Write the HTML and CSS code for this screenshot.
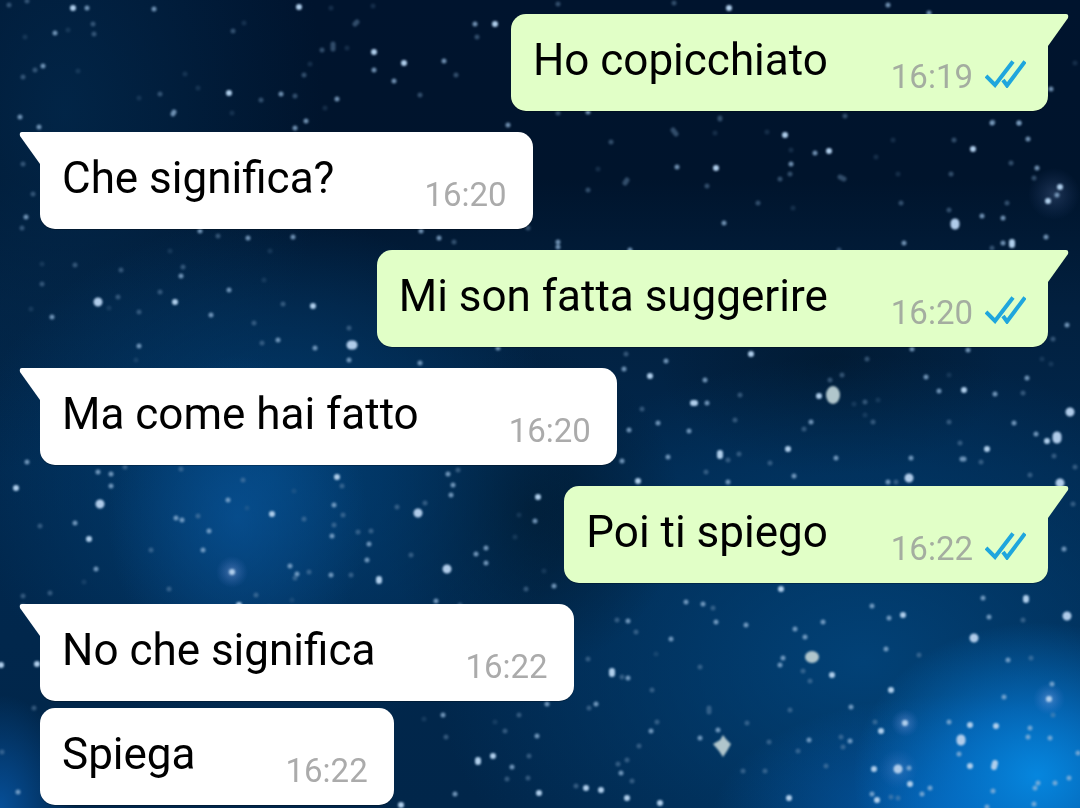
FILE: index.html
```html
<!DOCTYPE html>
<html lang="it">
<head>
<meta charset="utf-8">
<meta name="viewport" content="width=device-width, initial-scale=1">
<title>Chat</title>
<link rel="stylesheet" href="styles.css">
</head>
<body>
<svg class="sky" viewBox="0 0 1080 808" preserveAspectRatio="xMidYMid slice" aria-hidden="true">
  <defs>
    <radialGradient id="halo"><stop offset="0" stop-color="#9db4f0" stop-opacity=".4"/><stop offset="1" stop-color="#5c80d8" stop-opacity="0"/></radialGradient>
  </defs>
  <g fill="url(#halo)"><circle cx="232" cy="572" r="16"/><circle cx="905" cy="723" r="14"/><circle cx="1049" cy="699" r="16"/><circle cx="1054" cy="194" r="26" opacity=".5"/><circle cx="898" cy="769" r="20" opacity=".6"/></g>
  <path class="star star-faint" d="M68 30h0M25 37h0M78 71h0M244 23h0M331 8h0M373 6h0M347 48h0M310 64h0M185 74h0M198 88h0M139 98h0M325 108h0M232 113h0M42 264h0M170 251h0M264 280h0M270 251h0M109 308h0M31 309h0M136 360h0M715 133h0M767 132h0M791 150h0M598 169h0M793 208h0M876 157h0M898 174h0M893 140h0M84 582h0M247 508h0M161 607h0M292 600h0M294 491h0M519 515h0M515 537h0M544 571h0M854 404h0M878 400h0M865 415h0M949 375h0M1042 359h0M1051 364h0M656 654h0M424 719h0M495 722h0M1075 63h0"/>
  <path class="star star-dim" d="M9 5h0M27 1h0M93 24h0M94 34h0M35 70h0M23 77h0M233 31h0M355 24l2-2M477 37h0M322 50h0M333 44v5M456 75h0M304 75h0M160 94h0M261 100h0M295 96h0M420 95h0M23 164h0M22 228h0M33 194h0M75 265h0M42 284h0M121 270h0M183 267h0M160 292h0M139 312h0M118 297h0M218 236h0M283 304h0M254 323h0M262 343h0M349 328h0M558 113h0M720 119h0M673 130l3 4M611 142h0M790 174h0M780 179h0M625 183l2-3M588 190h0M707 186h0M758 203h0M845 116h0M840 177l4 2M901 203h0M954 140h0M993 122h0M1019 123h0M1011 163h0M951 174h0M1034 178h0M949 210h0M1007 203h0M992 248h0M839 250h0M40 526h0M23 606h0M50 593h0M125 467h0M181 469h0M243 480h0M198 516h0M151 550h0M169 589h0M256 595h0M269 607h0M295 578h0M309 572h0M351 575h0M358 532h0M371 531h0M334 525h0M343 515h0M342 486h0M304 519h0M458 470h0M425 503h0M397 507h0M411 555h0M526 589h0M460 605h0M626 354h0M740 395h0M642 409h0M735 420h0M830 380h0M842 375h0M865 402h0M873 422h0M804 429h0M770 463h0M739 454h0M728 460h0M706 472h0M896 482h0M1023 393h0M960 443h0M981 462h0M949 422h0M1054 456h0M1075 467h0M1053 339h0M1073 504h0M1030 475h0M867 359h0M713 608h0M617 620h0M636 632h0M810 681h0M803 671h0M1023 620h0M919 655h0M1031 658h0M1053 715h0M790 710h0M588 659h0M622 677h0M700 667h0M652 690h0M589 708h0M709 708v4M657 722h0M639 746h0M747 723h0M769 742h0M798 751h0M841 737h0M843 747h0M826 766h0M743 771h0M765 771h0M618 764h0M627 760h0M632 781h0M875 722h0M891 797h0M898 798h0M446 737h0M519 715h0M505 731h0M507 779h0M529 756h0M528 778h0M576 786h0M23 596h0M34 708h0M2 752h0M454 242h0M528 228h0M674 3h0M558 4h0M720 118h0"/>
  <path class="star star-mid" d="M87 8h0M154 9h0M55 33h0M43 66h0M475 24h0M374 70h0M444 61h0M394 81h0M173 114l1-2M281 94h0M337 99h0M306 121h0M295 128h0M20 117h0M39 127h0M508 125h0M26 217h0M200 231h0M248 238h0M293 237h0M181 276h0M229 290h0M211 315h0M52 317h0M139 346h0M278 340h0M315 348h0M349 360h0M588 112h0M677 167h0M815 153h0M791 164h0M724 223h0M558 247h0M630 250h0M1028 139h0M1037 168h0M1057 195h0M982 216h0M1003 218h0M1046 237h0M1003 243h0M904 243h0M27 462h0M98 472h0M111 474h0M111 486h0M75 523h0M96 569h0M228 500h0M176 518h0M182 520h0M209 531h0M203 550h0M290 566h0M297 574h0M331 575h0M367 560h0M369 544h0M332 536h0M334 505h0M448 474h0M453 485h0M451 495h0M476 554h0M486 548h0M486 563h0M535 521h0M554 586h0M436 601h0M666 361h0M624 369h0M705 380h0M707 403h0M658 423h0M629 430h0M689 431h0M811 422h0M836 458h0M794 476h0M668 457h0M622 461h0M728 482h0M911 458h0M888 482h0M912 349h0M968 350h0M926 377h0M939 391h0M995 394h0M1027 378h0M1036 434h0M1014 423h0M962 459h2M1067 325h0M1064 549h0M1052 268h0M686 602h0M703 604h0M716 622h0M628 621h0M671 639h0M746 625h0M795 629h0M823 622h0M805 637h0M783 658h0M780 665h0M872 606h0M889 618h0M983 598h0M989 617h0M886 649h0M1008 660h0M1052 684h0M1004 697h0M851 707h0M628 678h0M596 704h0M651 731h0M700 738h0M718 730h0M809 740h0M850 741h0M621 773h0M949 722h0M1030 728h0M1028 737h0M1050 738h0M959 754h0M909 768h0M930 788h0M922 794h0M872 794h0M1038 783h0M1035 788h0M1055 783h0M1069 778h0M1034 804h0M993 791h0M987 807h0M1078 753h0M443 715h0M547 704h0M537 736h0M512 767h0M455 794h0M18 792h0M421 231h0M439 238h0M558 242h0M420 363h0M498 348h0M888 5h0M929 13h0M1051 89h0M992 123h0M1019 123h0"/>
  <path class="star star-bright" d="M73 8h0M299 7h0M495 24h0M374 52h0M404 63h0M229 93h0M175 302h0M313 306h0M716 168h0M785 135h0M829 151h0M973 149h0M1060 187h0M1048 201h0M1012 242v3M16 488h0M89 539h0M272 514h0M232 572h0M239 605h0M379 579v2M337 477h0M538 497h0M650 376h0M751 354h0M693 403h2M819 396h0M788 449h0M720 453v3M638 481h0M964 390h0M1047 441h0M987 449h0M781 589h0M832 675h0M903 615h0M1026 598v2M1049 699h0M891 690h0M612 671v3M789 798h0M627 798h0M586 788h0M601 790h0M660 803h0M881 731h0M905 723h0M970 725h0M996 726h0M970 766h0M995 763l-1 4M874 769h0M910 784h0M877 800h0M493 756h0M478 760v2M539 793h0M401 805h0M1 665h0M37 664h0M729 8h0"/>
  <path class="star star-large" d="M351 345h2M955 223v2M100 504h0M418 513h0M447 569h0M909 478h0M1070 412h0M1057 436v3M1060 483h0M1067 616h0M974 638h0M961 739v2M898 769h0M98 302h0"/>
  <g class="star-giant"><ellipse cx="833" cy="395" rx="7" ry="9"/><ellipse cx="812" cy="657" rx="7" ry="6"/><path d="M713 744l7-4 3-5 3 4 5 5-4 7-4 6-4-6z"/></g>
</svg>

<svg class="symbols" aria-hidden="true">
  <symbol id="tail" viewBox="0 0 21 32"><path d="M0 0h18q3 0 2 4L0 32z"/></symbol>
  <symbol id="ticks" viewBox="0 0 41 29"><path d="M1 17l9 9L28 2.500M18 21l4 5.500L40 2.500"/></symbol>
</svg>

<main class="chat">
  <article class="bubble sent first">
    <p class="message">Ho copicchiato</p>
    <div class="meta"><time>16:19</time><svg class="ticks" role="img" aria-label="Letto"><use href="#ticks"/></svg></div>
    <svg class="tail" aria-hidden="true"><use href="#tail"/></svg>
  </article>
  <article class="bubble received first">
    <p class="message">Che significa?</p>
    <div class="meta"><time>16:20</time></div>
    <svg class="tail" aria-hidden="true"><use href="#tail"/></svg>
  </article>
  <article class="bubble sent first">
    <p class="message">Mi son fatta suggerire</p>
    <div class="meta"><time>16:20</time><svg class="ticks" role="img" aria-label="Letto"><use href="#ticks"/></svg></div>
    <svg class="tail" aria-hidden="true"><use href="#tail"/></svg>
  </article>
  <article class="bubble received first">
    <p class="message">Ma come hai fatto</p>
    <div class="meta"><time>16:20</time></div>
    <svg class="tail" aria-hidden="true"><use href="#tail"/></svg>
  </article>
  <article class="bubble sent first">
    <p class="message">Poi ti spiego</p>
    <div class="meta"><time>16:22</time><svg class="ticks" role="img" aria-label="Letto"><use href="#ticks"/></svg></div>
    <svg class="tail" aria-hidden="true"><use href="#tail"/></svg>
  </article>
  <article class="bubble received first">
    <p class="message">No che significa</p>
    <div class="meta"><time>16:22</time></div>
    <svg class="tail" aria-hidden="true"><use href="#tail"/></svg>
  </article>
  <article class="bubble received">
    <p class="message">Spiega</p>
    <div class="meta"><time>16:22</time></div>
  </article>
</main>
</body>
</html>
```

FILE: styles.css
```css
* {
  box-sizing: border-box;
}

body {
  margin: 0;
  min-height: 100vh;
  font-family: Roboto, "Liberation Sans", sans-serif;
  color: #000;
  background: #02203f;
}

/* Night sky behind the conversation */
.sky {
  position: fixed;
  inset: 0;
  z-index: -1;
  width: 100%;
  height: 100%;
  background:
    radial-gradient(ellipse 17% 19% at 96% 96%, #0686de 0%, rgba(5, 120, 210, 0.7) 45%, rgba(4, 90, 170, 0) 100%),
    radial-gradient(ellipse 22% 15% at 88% 101%, rgba(4, 100, 190, 0.8) 0%, rgba(4, 90, 170, 0) 100%),
    radial-gradient(ellipse 7% 14% at 0% 100%, #064f98 0%, rgba(6, 79, 152, 0) 100%),
    radial-gradient(ellipse 12% 20% at 22% 64%, rgba(10, 88, 160, 0.6) 0%, rgba(6, 70, 135, 0) 100%),
    radial-gradient(ellipse 28% 32% at 25% 59%, rgba(2, 68, 124, 0.8) 0%, rgba(2, 60, 115, 0) 100%),
    radial-gradient(ellipse 14% 20% at 49% 63%, rgba(1, 26, 48, 0.85) 0%, rgba(1, 26, 48, 0) 100%),
    radial-gradient(ellipse 40% 38% at 80% 82%, rgba(2, 70, 126, 0.85) 0%, rgba(2, 60, 115, 0) 100%),
    radial-gradient(ellipse 16% 14% at 77% 45%, rgba(1, 22, 42, 0.6) 0%, rgba(1, 22, 42, 0) 100%),
    radial-gradient(ellipse 24% 50% at 6% 14%, rgba(3, 48, 88, 0.6) 0%, rgba(2, 38, 70, 0) 100%),
    linear-gradient(180deg, #00142e 0%, #00142c 22%, #02203f 38%, #01284e 58%, #01264a 100%);
}

.star {
  fill: none;
  stroke-linecap: round;
  filter: blur(1px);
}

.star-faint {
  stroke: #55799c;
  stroke-width: 5px;
  opacity: 0.25;
}

.star-dim {
  stroke: #6f92b5;
  stroke-width: 5px;
  opacity: 0.45;
}

.star-mid {
  stroke: #93b7da;
  stroke-width: 5px;
  opacity: 0.75;
}

.star-bright {
  stroke: #b0cfec;
  stroke-width: 6px;
}

.star-large {
  stroke: #b0ccea;
  stroke-width: 9px;
}

.star-giant {
  fill: #b0c6cc;
  filter: blur(1px);
}

.symbols {
  position: absolute;
  width: 0;
  height: 0;
}

.chat {
  display: flex;
  flex-direction: column;
  gap: 7px;
  padding: 0 32px 3px 40px;
}

.bubble {
  position: relative;
  display: flex;
  max-width: 90%;
  min-height: 97px;
  padding: 20px 26px 14px 22px;
  border-radius: 15px;
  box-shadow: 0 1px 0 rgba(0, 0, 0, 0.25);
}

.bubble.first {
  margin-top: 14px;
}

.received {
  align-self: flex-start;
  gap: 90px;
  background: #fff;
  fill: #fff;
}

.received.first {
  border-top-left-radius: 0;
}

.sent {
  align-self: flex-end;
  gap: 63px;
  padding-right: 22px;
  background: #e1ffc7;
  fill: #e1ffc7;
}

.sent.first {
  border-top-right-radius: 0;
}

.message {
  margin: 0;
  font-size: 44px;
  line-height: 52px;
}

.meta {
  display: flex;
  align-self: flex-end;
  align-items: baseline;
  gap: 12px;
  font-size: 33px;
  line-height: 40px;
  color: #ababab;
}

.sent .meta {
  color: #a4ada0;
}

.ticks {
  width: 41px;
  height: 29px;
  fill: none;
  stroke: #1fa6dd;
  stroke-width: 4px;
}

/* Pointer that sticks out of the bubble's upper corner */
.tail {
  position: absolute;
  top: 0;
  left: 100%;
  width: 21px;
  height: 32px;
}

.received .tail {
  right: 100%;
  left: auto;
  transform: scaleX(-1);
}
```
